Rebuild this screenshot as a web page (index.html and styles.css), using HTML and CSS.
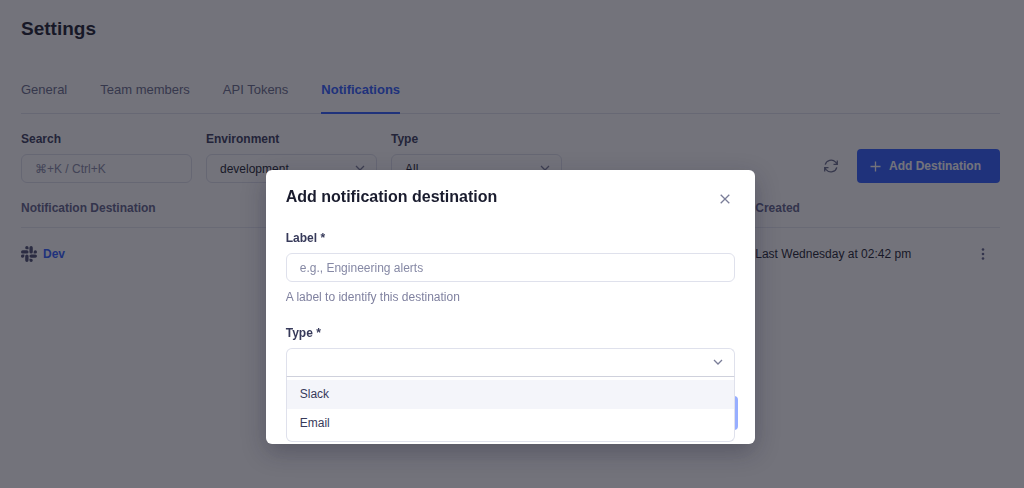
FILE: index.html
```html
<!DOCTYPE html>
<html lang="en">
<head>
    <meta charset="UTF-8">
    <meta name="viewport" content="width=device-width, initial-scale=1.0">
    <title>Settings</title>
    <link rel="stylesheet" href="styles.css">
</head>
<body>

<main class="page">
    <h1>Settings</h1>

    <nav class="tabs">
        <a href="#general">General</a>
        <a href="#team">Team members</a>
        <a href="#tokens">API Tokens</a>
        <a href="#notifications" class="active">Notifications</a>
    </nav>

    <div class="toolbar">
        <div class="field filter">
            <label for="search">Search</label>
            <input type="text" id="search" placeholder="⌘+K / Ctrl+K">
        </div>
        <div class="field filter">
            <label for="environment">Environment</label>
            <div class="select-wrap">
                <select id="environment">
                    <option>development</option>
                </select>
                <svg class="chevron" viewBox="0 0 10 6"><path d="M1 1l4 4 4-4"/></svg>
            </div>
        </div>
        <div class="field filter">
            <label for="filterType">Type</label>
            <div class="select-wrap">
                <select id="filterType">
                    <option>All</option>
                </select>
                <svg class="chevron" viewBox="0 0 10 6"><path d="M1 1l4 4 4-4"/></svg>
            </div>
        </div>

        <div class="actions">
            <button type="button" class="icon-button" aria-label="Refresh">
                <svg width="14" height="14" viewBox="0 0 14 14">
                    <path d="M13.3 1.5v3.8H9.5M0.7 12.5V8.7h3.8M1.2 5.7A6 6 0 0 1 11.6 3.2l1.7 2.1M0.7 8.7l1.7 2.1A6 6 0 0 0 12.8 8.3"/>
                </svg>
            </button>
            <button type="button" class="primary">
                <svg width="11" height="11" viewBox="0 0 11 11"><path d="M5.5 0.5v10M0.5 5.5h10"/></svg>
                Add Destination
            </button>
        </div>
    </div>

    <table>
        <thead>
            <tr>
                <th class="col-name">Notification Destination</th>
                <th>Created</th>
                <th class="col-menu"></th>
            </tr>
        </thead>
        <tbody>
            <tr>
                <td>
                    <div class="destination">
                        <!-- Slack mark -->
                        <svg width="16" height="16" viewBox="0 0 24 24">
                            <path d="M5.04 15.17a2.53 2.53 0 1 1-2.52-2.53h2.52zM6.31 15.17a2.52 2.52 0 0 1 5.04 0v6.31a2.52 2.52 0 0 1-5.04 0zM8.83 5.04a2.52 2.52 0 1 1 2.52-2.52v2.52zM8.83 6.31a2.52 2.52 0 0 1 0 5.04H2.52a2.52 2.52 0 0 1 0-5.04zM18.96 8.83a2.52 2.52 0 1 1 2.52 2.52h-2.52zM17.69 8.83a2.52 2.52 0 0 1-5.04 0V2.52a2.52 2.52 0 0 1 5.04 0zM15.17 18.96a2.52 2.52 0 1 1-2.52 2.52v-2.52zM15.17 17.69a2.52 2.52 0 0 1 0-5.04h6.31a2.52 2.52 0 0 1 0 5.04z"/>
                        </svg>
                        <a href="#dev">Dev</a>
                    </div>
                </td>
                <td>Last Wednesday at 02:42 pm</td>
                <td>
                    <button type="button" class="more" aria-label="More actions">
                        <svg width="4" height="12" viewBox="0 0 4 12"><circle cx="2" cy="1.5" r="1.3"/><circle cx="2" cy="6" r="1.3"/><circle cx="2" cy="10.5" r="1.3"/></svg>
                    </button>
                </td>
            </tr>
        </tbody>
    </table>
</main>

<div class="overlay">
    <form class="modal" role="dialog" aria-labelledby="modalTitle">
        <div class="modal-header">
            <h2 id="modalTitle">Add notification destination</h2>
            <button type="button" class="close" aria-label="Close">
                <svg width="10" height="10" viewBox="0 0 10 10"><path d="M0.7 0.7l8.6 8.6M9.3 0.7l-8.6 8.6"/></svg>
            </button>
        </div>

        <div class="field">
            <label for="label">Label *</label>
            <input type="text" id="label" placeholder="e.g., Engineering alerts" required>
            <p class="hint">A label to identify this destination</p>
        </div>

        <div class="field">
            <label for="type">Type *</label>
            <div class="select-wrap open">
                <select id="type" required>
                    <option value=""></option>
                    <option value="slack">Slack</option>
                    <option value="email">Email</option>
                </select>
                <svg class="chevron" viewBox="0 0 10 6"><path d="M1 1l4 4 4-4"/></svg>
                <ul class="menu" role="listbox">
                    <li class="highlighted" role="option">Slack</li>
                    <li role="option">Email</li>
                </ul>
            </div>
        </div>

        <div class="modal-footer">
            <button type="submit" class="primary" aria-label="Add" disabled></button>
        </div>
    </form>
</div>

</body>
</html>
```
FILE: styles.css
```css
* {
    box-sizing: border-box;
}

body {
    margin: 0;
    background-color: #fff;
    color: #1a1c2e;
    font-family: "Liberation Sans", Arial, sans-serif;
    font-size: 12px;
    line-height: 16px;
}

h1, h2, p, ul {
    margin: 0;
    padding: 0;
}

button {
    border: none;
    padding: 0;
    background: none;
    font: inherit;
    cursor: pointer;
}

svg {
    display: block;
    flex: none;
    fill: none;
    stroke: currentColor;
    stroke-width: 1.3;
}

.page {
    padding: 17px 24px 0 21px;
}

h1 {
    font-size: 19px;
    line-height: 24px;
}

/* Tabs */
.tabs {
    display: flex;
    gap: 33px;
    margin-top: 40px;
    border-bottom: 1px solid #e0e3ee;
}

.tabs a {
    margin-bottom: -1px;
    padding-bottom: 13px;
    border-bottom: 2px solid transparent;
    color: #686b8a;
    font-size: 13px;
    line-height: 18px;
    text-decoration: none;
}

.tabs .active {
    border-color: #2f5eff;
    color: #2f5eff;
    font-weight: bold;
}

/* Form fields */
.field label {
    display: block;
    margin-bottom: 7px;
    color: #373a5a;
    font-weight: bold;
}

.field input, .field select {
    display: block;
    width: 100%;
    height: 29px;
    padding: 0 13px;
    border: 1px solid #dfe1ec;
    border-radius: 6px;
    background-color: #fff;
    color: #1a1c2e;
    font: inherit;
    appearance: none;
}

.field input::placeholder {
    color: #8689a5;
}

.select-wrap {
    position: relative;
}

.chevron {
    position: absolute;
    top: 11px;
    right: 12px;
    width: 10px;
    height: 6px;
    color: #7a7d98;
    pointer-events: none;
}

.toolbar {
    display: flex;
    align-items: flex-end;
    gap: 14px;
    margin-top: 17px;
}

.filter {
    width: 171px;
}

.actions {
    display: flex;
    align-items: center;
    gap: 19px;
    margin-left: auto;
}

.icon-button {
    color: #686b8a;
}

.primary {
    display: flex;
    align-items: center;
    gap: 8px;
    height: 34px;
    padding: 0 19px 0 13px;
    border-radius: 4px;
    background-color: #2f5eff;
    color: #fff;
    font-weight: bold;
}

/* Destinations */
table {
    width: 100%;
    border-collapse: collapse;
    table-layout: fixed;
}

th, td {
    padding: 0;
    text-align: left;
}

th {
    height: 44px;
    padding-top: 6px;
    border-bottom: 1px solid #e6e8f1;
    color: #5f628a;
}

td {
    height: 54px;
}

.col-name {
    width: 75%;
}

.col-menu {
    width: 34px;
}

.destination {
    display: flex;
    align-items: center;
    gap: 6px;
}

.destination svg {
    fill: #4b4e70;
    stroke: none;
}

.destination a {
    color: #2f5eff;
    font-weight: bold;
    text-decoration: none;
}

.more {
    display: block;
    margin: 0 auto;
    color: #5f628a;
}

.more svg {
    fill: currentColor;
    stroke: none;
}

/* Modal */
.overlay {
    position: fixed;
    inset: 0;
    padding: 170px 24px 0 21px;
    background-color: rgba(21, 21, 35, 0.6);
}

.modal {
    width: 50%;
    min-width: 320px;
    margin: 0 auto;
    padding: 16px 20px 14px;
    border-radius: 6px;
    background-color: #fff;
    box-shadow: 0 8px 24px rgba(20, 20, 45, 0.3);
}

.modal-header {
    display: flex;
    justify-content: space-between;
    margin-bottom: 22px;
}

h2 {
    font-size: 16px;
    line-height: 22px;
}

.close {
    align-self: flex-end;
    padding: 4px 5px;
    color: #7a7d98;
}

.hint {
    margin: 7px 0 20px;
    color: #8082a0;
}

.open select {
    border-bottom-color: #cfd1dc;
    border-radius: 6px 6px 0 0;
}

.menu {
    position: absolute;
    top: 100%;
    left: 0;
    right: 0;
    padding: 3px 0;
    border: 1px solid #dfe1ec;
    border-top: none;
    border-radius: 0 0 6px 6px;
    background-color: #fff;
    list-style: none;
}

.menu li {
    padding: 6px 13px 7px;
    color: #373a5a;
}

.menu .highlighted {
    background-color: #f4f5fa;
}

.modal-footer {
    display: flex;
    justify-content: flex-end;
    margin: 19px -3px 0 0;
}

.modal-footer .primary {
    width: 72px;
}

.primary:disabled {
    background-color: #97aeff;
}
```
